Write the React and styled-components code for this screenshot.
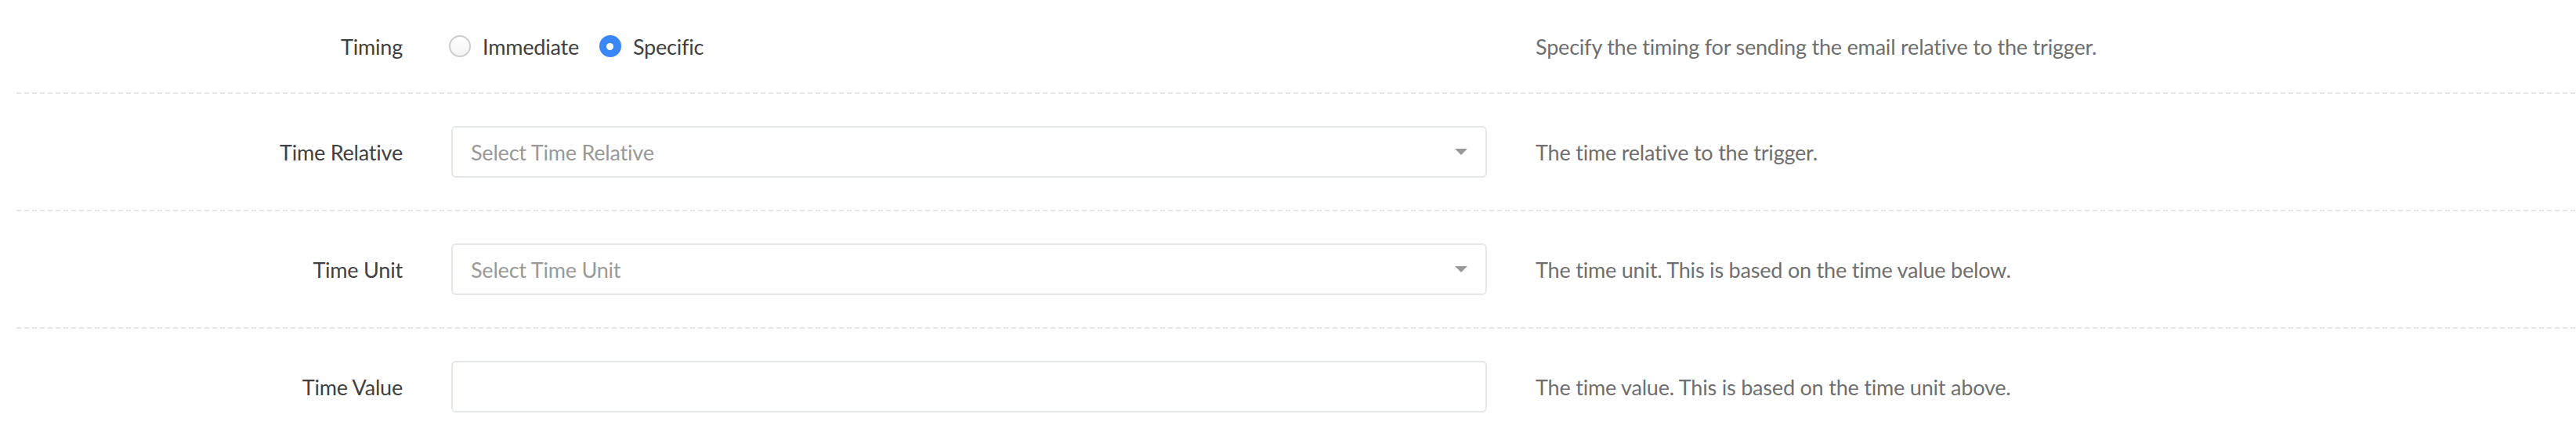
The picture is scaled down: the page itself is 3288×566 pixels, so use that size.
import React from 'react'
import styled, { createGlobalStyle } from 'styled-components'

const GlobalStyle = createGlobalStyle`
  body {
    margin: 0;
    background: #fff;
    font-family: Lato, "Liberation Sans", sans-serif;
    font-size: 27px;
    letter-spacing: -0.2px;
  }
`

const Form = styled.form`
  padding-left: 21px;
`

const Row = styled.div`
  display: grid;
  grid-template-columns: 493px 1322px 1fr;
  column-gap: 62px;
  align-items: center;
  padding: 41px 0 43px;
  background: repeating-linear-gradient(90deg, #e3e6ea 0 6px, transparent 6px 10px) left bottom / 100% 2px no-repeat;
`

const Label = styled.label`
  text-align: right;
  color: #404040;
`

const Help = styled.div`
  color: #6f6f6f;
`

const RadioGroup = styled.div`
  display: flex;
  align-items: center;
  height: 36px;
  margin-left: -3px;
`

const RadioOption = styled.label`
  display: flex;
  align-items: center;
  gap: 15px;
  margin-right: 26px;
  color: #404040;
`

const RadioDot = styled.span`
  width: 28px;
  height: 28px;
  box-sizing: border-box;
  border-radius: 50%;
  display: flex;
  align-items: center;
  justify-content: center;
  background: ${p => (p.$checked ? '#3b87f7' : 'linear-gradient(#fff, #f4f4f4)')};
  border: 2px solid ${p => (p.$checked ? '#3b87f7' : '#cdcdcd')};
  &::after {
    content: '';
    display: ${p => (p.$checked ? 'block' : 'none')};
    width: 9px;
    height: 9px;
    border-radius: 50%;
    background: #fff;
  }
`

const SelectBox = styled.div`
  height: 66px;
  box-sizing: border-box;
  border: 2px solid #e3e6ea;
  border-radius: 6px;
  display: flex;
  align-items: center;
  justify-content: space-between;
  padding: 0 23px 0 23px;
  color: #999;
  background: #fff;
`

const Caret = styled.span`
  width: 0;
  height: 0;
  border-left: 8px solid transparent;
  border-right: 8px solid transparent;
  border-top: 8px solid #999;
`

const TextInput = styled.input`
  height: 66px;
  width: 100%;
  box-sizing: border-box;
  border: 2px solid #e3e6ea;
  border-radius: 6px;
  padding: 0 23px;
  font: inherit;
  color: #404040;
  outline: none;
`

const Select = ({ placeholder }) => (
  <SelectBox>
    <span>{placeholder}</span>
    <Caret />
  </SelectBox>
)

export default function App() {
  return (
    <>
      <GlobalStyle />
      <Form>
        <Row>
          <Label>Timing</Label>
          <RadioGroup>
            <RadioOption>
              <RadioDot />
              Immediate
            </RadioOption>
            <RadioOption>
              <RadioDot $checked />
              Specific
            </RadioOption>
          </RadioGroup>
          <Help>Specify the timing for sending the email relative to the trigger.</Help>
        </Row>
        <Row>
          <Label>Time Relative</Label>
          <Select placeholder="Select Time Relative" />
          <Help>The time relative to the trigger.</Help>
        </Row>
        <Row>
          <Label>Time Unit</Label>
          <Select placeholder="Select Time Unit" />
          <Help>The time unit. This is based on the time value below.</Help>
        </Row>
        <Row>
          <Label>Time Value</Label>
          <TextInput type="text" />
          <Help>The time value. This is based on the time unit above.</Help>
        </Row>
      </Form>
    </>
  )
}
